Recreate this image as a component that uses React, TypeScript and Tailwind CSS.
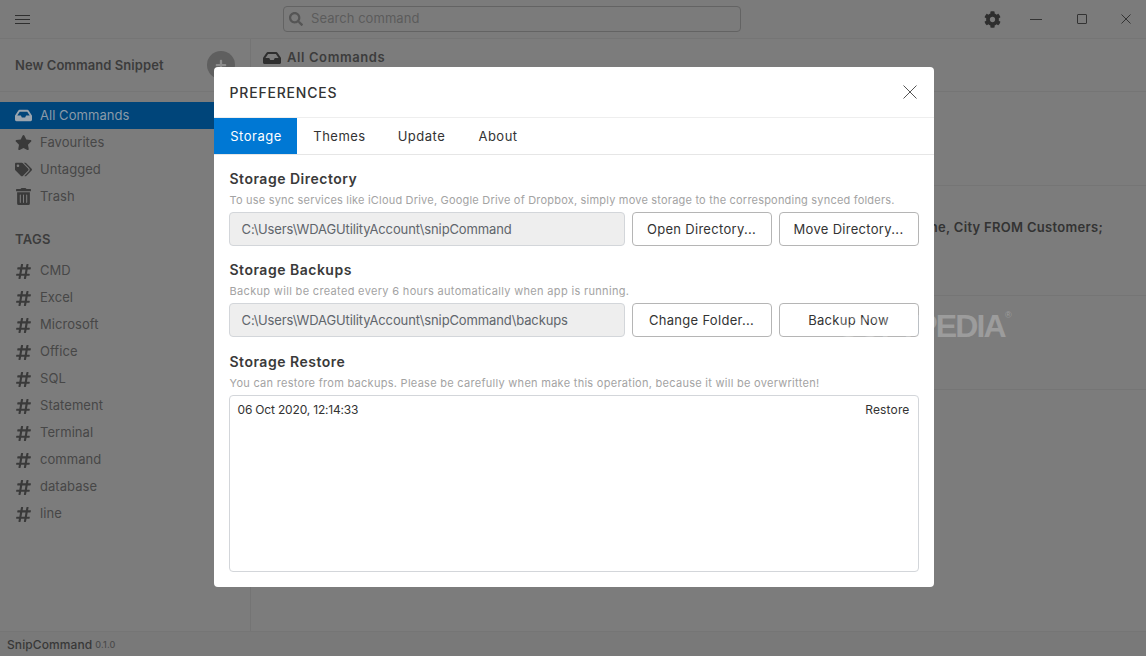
import React from "react";
import { FaCog, FaHashtag, FaInbox, FaPlus, FaSearch, FaStar, FaTags, FaTrashAlt } from "react-icons/fa";

const tags = ["CMD", "Excel", "Microsoft", "Office", "SQL", "Statement", "Terminal", "command", "database", "line"];

function NavItem({ icon, label, active }: { icon: React.ReactNode; label: string; active?: boolean }) {
  return (
    <div className={`flex h-[27px] items-center pl-[15px] text-[13px] tracking-[0.05px] ${active ? "bg-[#00457a] text-[#8a9aa8]" : "text-[#474747]"}`}>
      <span className={`flex w-[25px] text-[17px] ${active ? "text-[#9aa5af]" : "text-[#3a3a3a]"}`}>{icon}</span>
      {label}
    </div>
  );
}

function PathRow({ path, first, second }: { path: string; first: string; second: string }) {
  return (
    <div className="mt-[5px] flex gap-[7px]">
      <div className="flex h-[34px] w-[396px] items-center rounded-[4px] border border-[#d3d6da] bg-[#eeeeee] pl-[12px] pt-[2px] text-[13px] tracking-[-0.12px] text-[#60656b]">
        {path}
      </div>
      <button className="h-[34px] w-[140px] rounded-[4px] border border-[#b5b5b5] bg-white pt-[2px] text-[13px] tracking-[0.3px] text-[#333333]">
        {first}
      </button>
      <button className="h-[34px] w-[140px] rounded-[4px] border border-[#b5b5b5] bg-white pt-[2px] text-[13px] tracking-[0.3px] text-[#333333]">
        {second}
      </button>
    </div>
  );
}

export default function App() {
  return (
    <div className="relative flex h-[656px] w-[1146px] flex-col overflow-hidden bg-[#7c7c7c] font-['Inter',sans-serif]">
      <div className="flex h-[39px] shrink-0 items-center border-b border-[#757575] bg-[#7b7b7b]">
        <div className="ml-[15px] flex w-[268px] flex-col gap-[3px]">
          <span className="h-px w-[15px] bg-[#2f2f2f]" />
          <span className="h-px w-[15px] bg-[#2f2f2f]" />
          <span className="h-px w-[15px] bg-[#2f2f2f]" />
        </div>
        <div className="flex h-[26px] w-[458px] items-center rounded-[4px] border border-[#636363] pl-[5px] text-[13px] tracking-[0.05px] text-[#5c5c5c]">
          <FaSearch className="mr-[8px] text-[14px] text-[#555555]" />
          Search command
        </div>
        <FaCog className="ml-[243px] text-[17px] text-[#2e2e2e]" />
        <span className="ml-[29px] h-px w-[12px] bg-[#333333]" />
        <span className="ml-[35px] h-[10px] w-[10px] rounded-[1px] border border-[#333333]" />
        <svg className="ml-[34px]" width="10" height="10" viewBox="0 0 10 10" stroke="#333333" strokeWidth="1">
          <path d="M0.5 0.5 9.5 9.5M9.5 0.5 0.5 9.5" />
        </svg>
      </div>

      <div className="flex min-h-0 flex-1">
        <aside className="w-[251px] shrink-0 border-r border-[#747474]">
          <div className="flex h-[53px] items-center justify-between border-b border-[#767676] pl-[15px] pr-[15px]">
            <span className="pt-[2px] text-[13px] font-semibold tracking-[0.05px] text-[#3c3c3c]">New Command Snippet</span>
            <span className="flex h-[28px] w-[28px] items-center justify-center rounded-full bg-[#5f5f5f] text-[12px] text-[#8c8c8c]">
              <FaPlus />
            </span>
          </div>
          <div className="mt-[10px]">
            <NavItem icon={<FaInbox />} label="All Commands" active />
            <NavItem icon={<FaStar />} label="Favourites" />
            <NavItem icon={<FaTags />} label="Untagged" />
            <NavItem icon={<FaTrashAlt />} label="Trash" />
          </div>
          <div className="mb-[8px] mt-[20px] pl-[15px] text-[13px] font-semibold tracking-[0.3px] text-[#3c3c3c]">TAGS</div>
          {tags.map((tag) => (
            <NavItem key={tag} icon={<FaHashtag />} label={tag} />
          ))}
        </aside>

        <main className="min-w-0 flex-1">
          <div className="flex h-[53px] items-start gap-[6px] border-b border-[#757575] pl-[12px] pt-[9px] text-[13px] font-semibold tracking-[0.6px] text-[#3c3c3c]">
            <FaInbox className="mt-px text-[18px] text-[#2e2e2e]" />
            All Commands
          </div>
          <div className="h-[94px] border-b border-[#757575]" />
          <div className="flex h-[110px] items-start justify-end border-b border-[#757575] pr-[43px] pt-[32px] text-[13px] font-semibold tracking-[0.3px] text-[#333333]">
            ne, City FROM Customers;
          </div>
          <div className="h-[94px] border-b border-[#757575]" />
        </main>
      </div>

      <div className="flex h-[25px] shrink-0 items-center gap-[3px] border-t border-[#757575] bg-[#797979] pl-[7px] pt-[2px] text-[12px] font-medium tracking-[0.1px] text-[#383838]">
        SnipCommand <span className="text-[9px] text-[#4b4b4b]">0.1.0</span>
      </div>

      <div className="absolute inset-0 flex items-center justify-center pb-[2px] pl-[1px]">
        <div className="flex h-[520px] w-[720px] flex-col rounded-[4px] bg-white">
          <div className="flex h-[51px] shrink-0 items-center justify-between border-b border-[#eeeeee] pl-[15px] pr-[17px]">
            <span className="pl-px text-[14px] font-medium tracking-[0.8px] text-[#333333]">PREFERENCES</span>
            <svg width="14" height="14" viewBox="0 0 14 14" stroke="#555555" strokeWidth="1">
              <path d="M0.5 0.5 13.5 13.5M13.5 0.5 0.5 13.5" />
            </svg>
          </div>
          <div className="flex h-[37px] shrink-0 border-b border-[#e6e6e6] text-[13px] tracking-[0.5px] text-[#333333]">
            <div className="flex w-[83px] items-center justify-center bg-[#0078d4] pl-[2px] pt-[2px] text-white">Storage</div>
            <div className="flex w-[84px] items-center justify-center pl-[2px] pt-[2px]">Themes</div>
            <div className="flex w-[80px] items-center justify-center pl-[2px] pt-[2px]">Update</div>
            <div className="flex w-[73px] items-center justify-center pl-[2px] pt-[2px]">About</div>
          </div>
          <div className="flex min-h-0 flex-1 flex-col px-[15px] pb-[15px] pt-[15px]">
            <h2 className="pl-px text-[14px] font-semibold leading-[18px] tracking-[0.5px] text-[#3a3a3a]">Storage Directory</h2>
            <p className="mt-[5px] pl-px text-[11px] leading-[14px] tracking-[0.2px] text-[#a3a3a3]">
              To use sync services like iCloud Drive, Google Drive of Dropbox, simply move storage to the corresponding synced folders.
            </p>
            <PathRow path="C:\Users\WDAGUtilityAccount\snipCommand" first="Open Directory..." second="Move Directory..." />
            <h2 className="mt-[15px] pl-px text-[14px] font-semibold leading-[18px] tracking-[0.5px] text-[#3a3a3a]">Storage Backups</h2>
            <p className="mt-[5px] pl-px text-[11px] leading-[14px] tracking-[0.33px] text-[#a3a3a3]">
              Backup will be created every 6 hours automatically when app is running.
            </p>
            <PathRow path="C:\Users\WDAGUtilityAccount\snipCommand\backups" first="Change Folder..." second="Backup Now" />
            <h2 className="mt-[16px] pl-px text-[14px] font-semibold leading-[18px] tracking-[0.5px] text-[#3a3a3a]">Storage Restore</h2>
            <p className="mt-[5px] pl-px text-[11px] leading-[14px] tracking-[0.28px] text-[#a3a3a3]">
              You can restore from backups. Please be carefully when make this operation, because it will be overwritten!
            </p>
            <div className="mt-[5px] flex min-h-0 flex-1 items-start justify-between rounded-[4px] border border-[#d3d6da] px-[8px] pt-[5px] text-[12px] text-[#333333]">
              <span className="tracking-[-0.18px]">06 Oct 2020, 12:14:33</span>
              <span className="tracking-[0.15px]">Restore</span>
            </div>
          </div>
        </div>
      </div>

      <div className="absolute left-[838px] top-[307px] font-['Liberation_Sans',sans-serif] text-[32px] font-bold leading-[38px] tracking-[-1.8px] text-white/25">
        SOFTPEDIA<sup className="top-[-19px] text-[9px] font-normal">®</sup>
      </div>
    </div>
  );
}
